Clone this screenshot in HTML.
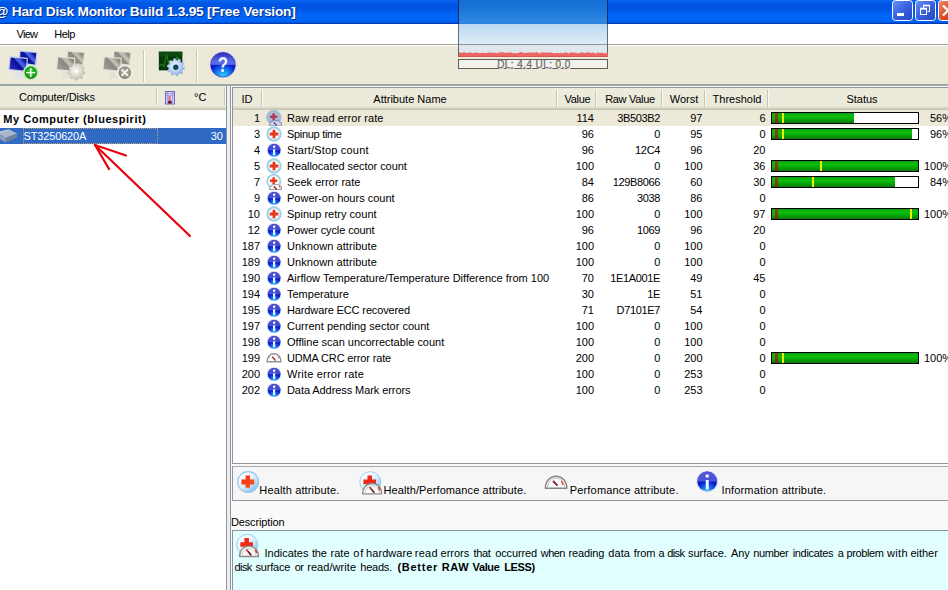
<!DOCTYPE html>
<html><head><meta charset="utf-8"><title>Hard Disk Monitor</title>
<style>
*{box-sizing:border-box;margin:0;padding:0}
html,body{width:948px;height:590px;overflow:hidden;background:#fafafa;font-family:"Liberation Sans",sans-serif;font-size:11px;color:#000}
.abs{position:absolute}
#title{left:0;top:0;width:948px;height:24px;background:linear-gradient(#0968f5 0,#0560ec 1.5px,#0055e2 3.5px,#0055e2 9px,#005cec 12px,#0066f8 15px,#0066f8 21px,#0058e0 22.5px,#0038b0 23.5px)}
#title .t{left:-5px;top:3.8px;color:#fff;font-weight:bold;font-size:13.7px;line-height:16px;letter-spacing:-0.2px;white-space:nowrap;text-shadow:1px 1px 0 #0a2a80}
#menu{left:0;top:24px;width:948px;height:20px;background:#fff}
#menu span{position:absolute;top:4px;font-size:11px}
#tb{left:0;top:44px;width:948px;height:42px;background:#ece9d8;border-top:1px solid #a5a295;box-shadow:inset 0 1px 0 #fff}
#tbline{left:0;top:84px;width:948px;height:2px;background:#9da7a6}
.sep{position:absolute;top:50px;width:1px;height:32px;background:#c9c6b6;border-right:1px solid #fff;box-sizing:content-box}
/* left */
#lhead{left:0;top:86px;width:226px;height:24px;background:linear-gradient(#ebeadb 0,#ebeadb 20px,#e4e1d1 21px,#d8d4c4 22px,#ccc8b8 23px,#c6c2b2 24px)}
#ltree{left:0;top:110px;width:226px;height:480px;background:#fff}
.hsep{position:absolute;top:2px;width:1px;height:17px;background:#c9c6b4;border-right:1px solid #faf9f2;box-sizing:content-box}
.hl{position:absolute;top:5px;white-space:nowrap}
#split{left:226px;top:86px;width:5px;height:504px;background:#eceff1;border-left:1px solid #8f959b;border-right:1px solid #8f959b}
/* right list */
#list{left:232px;top:87px;width:730px;height:377px;background:#fff;border:1px solid #8f959b}
#rhead{left:233px;top:88px;width:720px;height:22px;background:linear-gradient(#ebeadb 0,#ebeadb 18px,#e4e1d1 19px,#d8d4c4 20px,#ccc8b8 21px,#c6c2b2 22px)}
#rhead span{position:absolute;top:5px;white-space:nowrap;transform:translateX(-50%)}
.row{position:absolute;left:233px;width:715px;height:16px}
.row.sel{background:#ece9d8}
.c{position:absolute;top:1px;white-space:nowrap;line-height:14px}
.id{left:0;width:27px;text-align:right}
.ic{position:absolute;left:33px;top:0}
.nm{left:54px}
.v1,.v2,.v3,.v4{left:0;text-align:right}.v1{width:361px}.v2{width:427px;letter-spacing:-0.35px}.v3{width:469.5px}.v4{width:532.5px}
.bar{position:absolute;left:538px;top:2px;width:148px;height:12px;border:1px solid #000;background:#fff}
.bar i{position:absolute;top:0;height:10px}
.bar .g{left:0;background:linear-gradient(#0f9d0f 0,#0cc00c 30%,#0ab00a 55%,#067a06 100%)}
.bar .br{left:3px;width:3px;background:linear-gradient(#7a4a10,#8b3e0c 50%,#6a3008)}
.bar .ye{width:2px;background:#f0f000}
/* legend */
#legend{left:232px;top:466px;width:730px;height:35px;background:#f6f6f6;border:1px solid #8f959b;border-top-color:#a4aab0}
.lg{position:absolute;white-space:nowrap}
#desc{left:232px;top:530px;width:730px;height:70px;background:#e2ffff;border:1px solid #8a949e}
</style></head><body>
<svg width="0" height="0" style="position:absolute">
<defs>
<radialGradient id="gb" cx="50%" cy="45%" r="55%"><stop offset="0" stop-color="#fff"/><stop offset="0.65" stop-color="#f2f9fd"/><stop offset="1" stop-color="#c4e2f0"/></radialGradient>
<radialGradient id="gbs" cx="50%" cy="45%" r="55%"><stop offset="0" stop-color="#b8cce0"/><stop offset="1" stop-color="#9cb4d0"/></radialGradient>
<linearGradient id="gi" x1="0" y1="0" x2="0" y2="1"><stop offset="0" stop-color="#2a48d0"/><stop offset="0.45" stop-color="#0c28d0"/><stop offset="0.75" stop-color="#1448e0"/><stop offset="1" stop-color="#40a8f4"/></linearGradient>
<symbol id="ic-h" viewBox="0 0 16 16"><circle cx="8" cy="8" r="6.7" fill="url(#gb)" stroke="#a0d2e4" stroke-width="1.9"/><path d="M6.6 3.7h2.8v2.9h2.9v2.8h-2.9v2.9h-2.8v-2.9h-2.9v-2.8h2.9z" fill="#e8381c"/></symbol>
<symbol id="ic-i" viewBox="0 0 16 16"><circle cx="8.1" cy="8.2" r="7.1" fill="#c0ccf4" opacity="0.8"/><circle cx="8.1" cy="8.2" r="6.3" fill="url(#lgi2)"/><path d="M1.8 8.2a6.3 6.3 0 0 1 12.6 0z" fill="#5c62e2" opacity="0.7"/><circle cx="8.1" cy="4.7" r="1.25" fill="#f6f6ff"/><rect x="7.1" y="7.2" width="2" height="5.8" fill="#f4f8ff"/></symbol>
<symbol id="ic-hp" viewBox="0 0 16 16"><circle cx="7.8" cy="7.4" r="6.7" fill="url(#gb)" stroke="#a0d2e4" stroke-width="1.7"/><path d="M6.4 3.3h2.5v2.3h2.4v2.5h-2.4v2.3h-2.5v-2.3h-2.4v-2.5h2.4z" fill="#e8381c"/><path d="M3.6 15.6c0-3.4 2.6-5.4 6-5.4s6.2 2 6.2 5.4z" fill="#fcfcfc" stroke="#9a9a9e" stroke-width="1.1"/><path d="M10.6 15.2l-2.8-3" stroke="#902020" stroke-width="1.3"/><path d="M13.2 11.8l0.9 2" stroke="#e04040" stroke-width="1"/></symbol>
<symbol id="ic-hps" viewBox="0 0 16 16"><circle cx="7.8" cy="7.4" r="7.2" fill="url(#gbs)" stroke="#a4c0d6" stroke-width="1"/><path d="M6.4 3.3h2.5v2.3h2.4v2.5h-2.4v2.3h-2.5v-2.3h-2.4v-2.5h2.4z" fill="#b43c58"/><path d="M3.6 16c0-3.6 2.6-5.6 6-5.6s6.2 2 6.2 5.6z" fill="#d0d4ec" stroke="#8890b8" stroke-width="1.1"/><path d="M10.6 15.4l-2.8-3" stroke="#503080" stroke-width="1.3"/></symbol>
<symbol id="ic-p" viewBox="0 0 16 16"><path d="M1 11.8c0-4.8 3-8 7-8s7 3.2 7 8z" fill="#fcfcfc" stroke="#949494" stroke-width="1.4" stroke-linejoin="round"/><path d="M9.6 10.6l-3.4-3.8" stroke="#8a2424" stroke-width="1.3"/><path d="M12 6.6l0.9 1.8" stroke="#d05050" stroke-width="0.9"/><path d="M3.2 8.4l0.8-1.6" stroke="#b0b0b0" stroke-width="0.8"/></symbol>
</defs></svg>

<div id="title" class="abs"><span class="abs t" id="tt"><span id="tat">@</span> <span id="th">Hard Disk Monitor Build 1.3.95 [Free Version]</span></span></div>
<!--BTN--><svg class="abs" style="left:880px;top:0" width="68" height="24" viewBox="880 0 68 24">
<defs>
<linearGradient id="bb" x1="0" y1="0" x2="1" y2="1"><stop offset="0" stop-color="#6a92f6"/><stop offset="0.5" stop-color="#3a62e0"/><stop offset="1" stop-color="#2444c0"/></linearGradient>
<linearGradient id="br" x1="0" y1="0" x2="1" y2="1"><stop offset="0" stop-color="#f08868"/><stop offset="0.5" stop-color="#dc5030"/><stop offset="1" stop-color="#b83418"/></linearGradient>
</defs>
<rect x="892.5" y="0.5" width="20" height="20" rx="3" fill="url(#bb)" stroke="#fff" stroke-width="1"/>
<rect x="897" y="13" width="7" height="3" fill="#fff"/>
<rect x="915.5" y="0.5" width="20" height="20" rx="3" fill="url(#bb)" stroke="#fff" stroke-width="1"/>
<path d="M923.5 8V5.5h6v6h-2" fill="none" stroke="#fff" stroke-width="1"/><path d="M923 5.5h7" stroke="#fff" stroke-width="1.6"/>
<rect x="920.5" y="8.8" width="6" height="5.7" fill="none" stroke="#fff" stroke-width="1"/><path d="M920 8.6h7" stroke="#fff" stroke-width="1.8"/>
<rect x="938.5" y="0.5" width="20" height="20" rx="3" fill="url(#br)" stroke="#fff" stroke-width="1"/>
<path d="M943 5.5l10 10M953 5.5l-10 10" stroke="#fff" stroke-width="2.2"/>
</svg><!--/BTN-->
<div id="menu" class="abs"><span style="left:16.5px;letter-spacing:-0.7px">View</span><span style="left:54.3px;letter-spacing:-0.55px">Help</span></div>
<div id="tb" class="abs"></div>
<div id="tbline" class="abs"></div>
<svg class="abs" style="left:0;top:44px;filter:blur(0.45px)" width="260" height="42" viewBox="0 44 260 42">
<defs>
<linearGradient id="scrB" x1="0" y1="0.7" x2="1" y2="0"><stop offset="0" stop-color="#222cb8"/><stop offset="0.44" stop-color="#0c0c94"/><stop offset="0.54" stop-color="#4a68e8"/><stop offset="0.66" stop-color="#3c54dc"/><stop offset="0.78" stop-color="#1418a4"/><stop offset="1" stop-color="#0e1090"/></linearGradient>
<linearGradient id="scrG" x1="0" y1="0.7" x2="1" y2="0"><stop offset="0" stop-color="#96948c"/><stop offset="0.44" stop-color="#807e76"/><stop offset="0.54" stop-color="#c0beb2"/><stop offset="0.66" stop-color="#b4b2a6"/><stop offset="0.78" stop-color="#86847a"/><stop offset="1" stop-color="#7e7c74"/></linearGradient>
<radialGradient id="grn" cx="50%" cy="45%" r="55%"><stop offset="0" stop-color="#58d458"/><stop offset="0.65" stop-color="#22a822"/><stop offset="1" stop-color="#0c780c"/></radialGradient>
<radialGradient id="gry" cx="50%" cy="45%" r="55%"><stop offset="0" stop-color="#b2b0a6"/><stop offset="0.65" stop-color="#9a988e"/><stop offset="1" stop-color="#807e74"/></radialGradient>
<linearGradient id="orbT" x1="0" y1="0" x2="0" y2="1"><stop offset="0" stop-color="#2830b8"/><stop offset="0.35" stop-color="#5a68e4"/><stop offset="1" stop-color="#6476e8"/></linearGradient>
<radialGradient id="orbB" cx="50%" cy="100%" r="80%"><stop offset="0" stop-color="#38d8ff"/><stop offset="0.35" stop-color="#1888f0"/><stop offset="0.7" stop-color="#0a20d0"/><stop offset="1" stop-color="#0610a0"/></radialGradient>
<radialGradient id="gearB" cx="45%" cy="40%" r="60%"><stop offset="0" stop-color="#eef5ff"/><stop offset="0.6" stop-color="#b4d0f4"/><stop offset="1" stop-color="#7ca4e0"/></radialGradient>
<radialGradient id="gearG" cx="45%" cy="40%" r="60%"><stop offset="0" stop-color="#f4f3ec"/><stop offset="0.6" stop-color="#dcdad0"/><stop offset="1" stop-color="#c4c2b6"/></radialGradient>
<clipPath id="orbTop"><rect x="205" y="50" width="36" height="14.6"/></clipPath>
<clipPath id="orbBot"><rect x="205" y="64.6" width="36" height="16"/></clipPath>
</defs>
<g transform="translate(0 0)" opacity="1">
 <path d="M19.3 50.5L37.5 52.0L36.2 65.8L18.6 63.8z" fill="#c4cdf0"/>
 <path d="M20.5 51.8L36.3 53.1L35 64.4L19.8 62.6z" fill="url(#scrB)"/>
 <path d="M28 66L32 66.4L32.3 69.5L35 71L27 70.5z" fill="#dfe3ee"/>
 <path d="M9.6 56.2L27.8 57.8L27.0 72.2L8.2 70.0z" fill="#c4cdf0"/>
 <path d="M10.8 57.6L26.6 58.9L25.9 70.8L9.5 68.9z" fill="url(#scrB)"/>
 <path d="M15.5 71.6L20.8 72L21.2 76.3L24.5 78.2L12 78L15.2 76z" fill="#dfe3ee"/>
</g><circle cx="30.8" cy="72.6" r="7.9" fill="#cdebc8" opacity="0.95"/><circle cx="30.8" cy="72.6" r="6.3" fill="url(#grn)"/><path d="M30.8 68v9.2M26.2 72.6h9.2" stroke="#f0fff0" stroke-width="1.4"/><g transform="translate(47.6 0)" opacity="0.9">
 <path d="M19.3 50.5L37.5 52.0L36.2 65.8L18.6 63.8z" fill="#e2e0d6"/>
 <path d="M20.5 51.8L36.3 53.1L35 64.4L19.8 62.6z" fill="url(#scrG)"/>
 <path d="M28 66L32 66.4L32.3 69.5L35 71L27 70.5z" fill="#e4e2d8"/>
 <path d="M9.6 56.2L27.8 57.8L27.0 72.2L8.2 70.0z" fill="#e2e0d6"/>
 <path d="M10.8 57.6L26.6 58.9L25.9 70.8L9.5 68.9z" fill="url(#scrG)"/>
 <path d="M15.5 71.6L20.8 72L21.2 76.3L24.5 78.2L12 78L15.2 76z" fill="#e4e2d8"/>
</g><polygon points="84.97,72.35 84.71,73.83 82.56,74.47 81.97,75.50 82.48,77.68 81.33,78.64 79.27,77.76 78.16,78.17 77.15,80.17 75.65,80.17 74.64,78.17 73.53,77.76 71.47,78.64 70.32,77.68 70.83,75.50 70.24,74.47 68.09,73.83 67.83,72.35 69.63,71.01 69.83,69.84 68.61,67.97 69.36,66.67 71.59,66.79 72.50,66.03 72.77,63.81 74.17,63.29 75.81,64.83 76.99,64.83 78.63,63.29 80.03,63.81 80.30,66.03 81.21,66.79 83.44,66.67 84.19,67.97 82.97,69.84 83.17,71.01" fill="url(#gearG)" stroke="#b4b2a6" stroke-width="0.6" stroke-linejoin="round"/><circle cx="76.4" cy="71.6" r="1.8" fill="#fff"/><g transform="translate(94 0)" opacity="0.9">
 <path d="M19.3 50.5L37.5 52.0L36.2 65.8L18.6 63.8z" fill="#e2e0d6"/>
 <path d="M20.5 51.8L36.3 53.1L35 64.4L19.8 62.6z" fill="url(#scrG)"/>
 <path d="M28 66L32 66.4L32.3 69.5L35 71L27 70.5z" fill="#e4e2d8"/>
 <path d="M9.6 56.2L27.8 57.8L27.0 72.2L8.2 70.0z" fill="#e2e0d6"/>
 <path d="M10.8 57.6L26.6 58.9L25.9 70.8L9.5 68.9z" fill="url(#scrG)"/>
 <path d="M15.5 71.6L20.8 72L21.2 76.3L24.5 78.2L12 78L15.2 76z" fill="#e4e2d8"/>
</g><circle cx="124.8" cy="72.6" r="7.9" fill="#f0efe6"/><circle cx="124.8" cy="72.6" r="6.3" fill="url(#gry)"/><path d="M121.6 69.4l6.4 6.4M128 69.4l-6.4 6.4" stroke="#f8f7f0" stroke-width="1.8"/><rect x="156.6" y="49.8" width="27.6" height="22.2" rx="1" fill="#f0f0e8" stroke="#d8d8cc" stroke-width="0.5"/><rect x="158.8" y="51.6" width="23.6" height="18.8" fill="#063606"/><path d="M159 66l3-2 2 3 2.5-13 2.5 11 2-4 3 2 3-6 3 3" fill="none" stroke="#1f7a1f" stroke-width="1.2"/><rect x="158.8" y="51.6" width="23.6" height="5" fill="#1a5a1a" opacity="0.5"/><polygon points="184.57,67.89 184.36,69.25 182.27,69.88 181.77,70.86 182.49,72.92 181.52,73.89 179.46,73.17 178.48,73.67 177.85,75.76 176.49,75.97 175.25,74.18 174.17,74.01 172.43,75.33 171.20,74.70 171.25,72.52 170.48,71.75 168.30,71.80 167.67,70.57 168.99,68.83 168.82,67.75 167.03,66.51 167.24,65.15 169.33,64.52 169.83,63.54 169.11,61.48 170.08,60.51 172.14,61.23 173.12,60.73 173.75,58.64 175.11,58.43 176.35,60.22 177.43,60.39 179.17,59.07 180.40,59.70 180.35,61.88 181.12,62.65 183.30,62.60 183.93,63.83 182.61,65.57 182.78,66.65" fill="url(#gearB)" stroke="#9cbce8" stroke-width="0.6" stroke-linejoin="round"/><circle cx="175.8" cy="67.2" r="2.7" fill="#0a4a58"/><circle cx="223" cy="64.7" r="13.5" fill="#d4ccf4" opacity="0.95"/><circle cx="223" cy="64.7" r="12.3" fill="url(#orbT)" clip-path="url(#orbTop)"/><circle cx="223" cy="64.7" r="12.3" fill="url(#orbB)" clip-path="url(#orbBot)"/><circle cx="223" cy="64.7" r="12.3" fill="none" stroke="#1a1c9c" stroke-width="0.8" opacity="0.7"/><text transform="translate(223 72.2) scale(0.8 1)" x="0" y="0" text-anchor="middle" font-family="Liberation Sans" font-weight="bold" font-size="21.5" fill="#f0f2ff">?</text></svg>
<div class="sep" style="left:143px"></div><div class="sep" style="left:196px"></div>

<!--OV--><div class="abs" id="ov" style="left:458px;top:0;width:150px;height:57px;border-bottom:1px solid #b84c4c;background:linear-gradient(#146ed4 0,#1a74d8 8px,#2680de 16px,#308ae4 23px,#2a7ad4 23.9px,#bad8f2 24px,#cde2f5 34px,#ddecf7 43.9px,#8c979e 44px,#8c979e 45px,#dfe8ec 45.1px,#dde6e8 57px)"><i class="abs" style="left:0;top:0;width:1px;height:24px;background:#0c2c6c"></i><i class="abs" style="right:0;top:0;width:1px;height:24px;background:#0c2c6c"></i><i class="abs" style="left:0;top:24px;width:1px;height:32px;background:#5e6a74"></i><i class="abs" style="right:0;top:24px;width:1px;height:32px;background:#5e6a74"></i></div>
<svg class="abs" style="left:0;top:0" width="948" height="60"><path d="M459 56.5L459.0 52.62L460.0 52.29L462.0 52.96L463.5 52.25L464.5 52.51L465.5 52.47L467.0 53.02L468.0 52.95L469.5 52.26L471.5 52.74L473.5 52.93L474.5 52.96L476.5 52.33L477.5 53.00L480.0 53.21L482.5 52.67L484.0 53.11L486.0 52.88L488.5 52.57L489.5 52.87L491.5 52.40L492.5 52.65L494.5 52.64L497.0 52.95L498.0 53.43L499.0 52.28L501.5 52.57L503.5 52.23L505.0 52.99L506.5 52.40L508.0 52.72L510.5 52.30L512.5 53.35L514.5 53.12L517.0 53.45L518.5 52.40L519.5 52.83L521.5 51.77L523.5 52.99L525.0 53.10L526.0 52.79L528.5 52.72L531.0 52.22L532.0 53.48L533.0 51.84L534.0 52.94L536.0 52.20L537.5 52.20L539.5 53.44L542.0 52.36L544.5 52.82L546.0 52.33L548.0 52.82L549.0 52.47L551.0 52.39L552.0 53.19L553.0 53.11L555.0 53.38L556.5 52.89L558.5 53.03L560.0 53.25L561.5 52.46L562.5 53.49L565.0 52.54L567.0 52.78L569.0 53.44L570.5 52.33L572.5 52.47L573.5 52.82L574.5 52.49L577.0 53.22L579.5 53.36L581.5 52.31L584.0 52.80L585.0 53.14L586.5 52.24L589.0 52.45L591.5 53.05L593.0 52.23L594.0 52.88L596.5 53.48L598.0 52.24L599.5 53.19L602.0 52.48L604.0 53.37L606.5 53.28L608 52.6L608 56.5z" fill="#ee6462"/></svg>
<div class="abs" style="left:458px;top:59px;width:150px;height:10px;border:1px solid #5e5e56;background:#f3f2ea"></div>
<span class="abs" id="dl" style="left:459px;top:58.7px;width:150px;text-align:center;font-size:10px;line-height:12px;color:#747470;-webkit-text-stroke:0.35px #747470;text-shadow:1px 1px 0 #fff;white-space:nowrap;letter-spacing:0.42px">DL: 4.4 UL: 0.0</span>
<!--/OV-->
<div id="lhead" class="abs"><span class="hl" style="left:19px;letter-spacing:-0.18px">Computer/Disks</span><i class="hsep" style="left:156px"></i><!--TH--><svg class="abs" style="left:163px;top:3px;filter:blur(0.3px)" width="14" height="17" viewBox="163 89 14 17"><rect x="165.5" y="91.5" width="9" height="12.5" fill="#d4ccfa" stroke="#6c6cb4" stroke-width="1"/><path d="M167.5 92v11M172.5 92v11" stroke="#a8a0ec" stroke-width="1"/><path d="M166 93.5h8M166 95.5h8" stroke="#8888d0" stroke-width="0.7" opacity="0.7"/><rect x="168.4" y="95.8" width="2.3" height="6" fill="#e07488"/><ellipse cx="169.9" cy="102.2" rx="1.9" ry="1.6" fill="#701030"/></svg><!--/TH--><span class="hl" style="left:194px">°C</span><i class="hsep" style="left:224px"></i></div>
<div id="ltree" class="abs">
 <span class="abs" style="left:3.3px;top:3px;font-weight:bold;white-space:nowrap;letter-spacing:0.54px">My Computer (bluespirit)</span>
 <div class="abs" style="left:0;top:18px;width:226px;height:16px;background:#316ac5;color:#fff"><svg class="abs" style="left:0;top:0" width="20" height="16" viewBox="0 128 20 16"><path d="M-4 132.2L8.6 129.2L17.2 133.4L5.8 138z" fill="#a9b7cf"/><path d="M-4 132.2L5.8 138L5.8 142.8L-4 137z" fill="#8e9dbb"/><path d="M5.8 138L17.2 133.4L17.2 137.6L5.8 142.8z" fill="#71809f"/><path d="M-2 133L7 130.4" stroke="#c4cfe2" stroke-width="0.8"/></svg><i class="abs" style="left:23px;top:0;width:135px;height:16px;border:1px dotted rgba(214,170,100,.85)"></i><span class="abs" style="left:23.5px;top:2px;letter-spacing:-0.15px">ST3250620A</span><span class="abs" style="right:3px;top:2px">30</span></div>
</div>
<div id="split" class="abs"></div>

<div id="list" class="abs"></div>
<div id="rhead" class="abs">
<span style="left:14px">ID</span><i class="hsep" style="left:28px"></i>
<span style="left:177px">Attribute Name</span><i class="hsep" style="left:323px"></i>
<span style="left:344.5px;letter-spacing:-0.3px">Value</span><i class="hsep" style="left:362px"></i>
<span style="left:397px;letter-spacing:-0.3px">Raw Value</span><i class="hsep" style="left:428px"></i>
<span style="left:451px">Worst</span><i class="hsep" style="left:471px"></i>
<span style="left:504px">Threshold</span><i class="hsep" style="left:534px"></i>
<span style="left:629px">Status</span>
</div>
<div class="row sel" style="top:110px"><span class="c id">1</span><svg class="ic" width="16" height="16" viewBox="0 0 16 16"><use href="#ic-hps"/></svg><span class="c nm" style="letter-spacing:0.061px">Raw read error rate</span><span class="c v1">114</span><span class="c v2">3B503B2</span><span class="c v3">97</span><span class="c v4">6</span><span class="bar"><i class="g" style="width:82px"></i><i class="br"></i><i class="ye" style="left:10px"></i></span><span class="c pc" style="left:697px">56%</span></div>
<div class="row" style="top:126px"><span class="c id">3</span><svg class="ic" width="16" height="16" viewBox="0 0 16 16"><use href="#ic-h"/></svg><span class="c nm" style="letter-spacing:-0.310px">Spinup time</span><span class="c v1">96</span><span class="c v2">0</span><span class="c v3">95</span><span class="c v4">0</span><span class="bar"><i class="g" style="width:140px"></i><i class="br"></i><i class="ye" style="left:10px"></i></span><span class="c pc" style="left:697px">96%</span></div>
<div class="row" style="top:142px"><span class="c id">4</span><svg class="ic" width="16" height="16" viewBox="0 0 16 16"><use href="#ic-i"/></svg><span class="c nm" style="letter-spacing:0.173px">Start/Stop count</span><span class="c v1">96</span><span class="c v2">12C4</span><span class="c v3">96</span><span class="c v4">20</span></div>
<div class="row" style="top:158px"><span class="c id">5</span><svg class="ic" width="16" height="16" viewBox="0 0 16 16"><use href="#ic-h"/></svg><span class="c nm" style="letter-spacing:-0.052px">Reallocated sector count</span><span class="c v1">100</span><span class="c v2">0</span><span class="c v3">100</span><span class="c v4">36</span><span class="bar"><i class="g" style="width:146px"></i><i class="br"></i><i class="ye" style="left:48px"></i></span><span class="c pc" style="left:691px">100%</span></div>
<div class="row" style="top:174px"><span class="c id">7</span><svg class="ic" width="16" height="16" viewBox="0 0 16 16"><use href="#ic-hp"/></svg><span class="c nm">Seek error rate</span><span class="c v1">84</span><span class="c v2">129B8066</span><span class="c v3">60</span><span class="c v4">30</span><span class="bar"><i class="g" style="width:123px"></i><i class="br"></i><i class="ye" style="left:40px"></i></span><span class="c pc" style="left:697px">84%</span></div>
<div class="row" style="top:190px"><span class="c id">9</span><svg class="ic" width="16" height="16" viewBox="0 0 16 16"><use href="#ic-i"/></svg><span class="c nm">Power-on hours count</span><span class="c v1">86</span><span class="c v2">3038</span><span class="c v3">86</span><span class="c v4">0</span></div>
<div class="row" style="top:206px"><span class="c id">10</span><svg class="ic" width="16" height="16" viewBox="0 0 16 16"><use href="#ic-h"/></svg><span class="c nm" style="letter-spacing:0.018px">Spinup retry count</span><span class="c v1">100</span><span class="c v2">0</span><span class="c v3">100</span><span class="c v4">97</span><span class="bar"><i class="g" style="width:146px"></i><i class="br"></i><i class="ye" style="left:138px"></i></span><span class="c pc" style="left:691px">100%</span></div>
<div class="row" style="top:222px"><span class="c id">12</span><svg class="ic" width="16" height="16" viewBox="0 0 16 16"><use href="#ic-i"/></svg><span class="c nm" style="letter-spacing:-0.100px">Power cycle count</span><span class="c v1">96</span><span class="c v2">1069</span><span class="c v3">96</span><span class="c v4">20</span></div>
<div class="row" style="top:238px"><span class="c id">187</span><svg class="ic" width="16" height="16" viewBox="0 0 16 16"><use href="#ic-i"/></svg><span class="c nm" style="letter-spacing:0.069px">Unknown attribute</span><span class="c v1">100</span><span class="c v2">0</span><span class="c v3">100</span><span class="c v4">0</span></div>
<div class="row" style="top:254px"><span class="c id">189</span><svg class="ic" width="16" height="16" viewBox="0 0 16 16"><use href="#ic-i"/></svg><span class="c nm" style="letter-spacing:0.069px">Unknown attribute</span><span class="c v1">100</span><span class="c v2">0</span><span class="c v3">100</span><span class="c v4">0</span></div>
<div class="row" style="top:270px"><span class="c id">190</span><svg class="ic" width="16" height="16" viewBox="0 0 16 16"><use href="#ic-i"/></svg><span class="c nm" style="letter-spacing:0.006px">Airflow Temperature/Temperature Difference from 100</span><span class="c v1">70</span><span class="c v2">1E1A001E</span><span class="c v3">49</span><span class="c v4">45</span></div>
<div class="row" style="top:286px"><span class="c id">194</span><svg class="ic" width="16" height="16" viewBox="0 0 16 16"><use href="#ic-i"/></svg><span class="c nm">Temperature</span><span class="c v1">30</span><span class="c v2">1E</span><span class="c v3">51</span><span class="c v4">0</span></div>
<div class="row" style="top:302px"><span class="c id">195</span><svg class="ic" width="16" height="16" viewBox="0 0 16 16"><use href="#ic-i"/></svg><span class="c nm" style="letter-spacing:-0.129px">Hardware ECC recovered</span><span class="c v1">71</span><span class="c v2">D7101E7</span><span class="c v3">54</span><span class="c v4">0</span></div>
<div class="row" style="top:318px"><span class="c id">197</span><svg class="ic" width="16" height="16" viewBox="0 0 16 16"><use href="#ic-i"/></svg><span class="c nm" style="letter-spacing:0.019px">Current pending sector count</span><span class="c v1">100</span><span class="c v2">0</span><span class="c v3">100</span><span class="c v4">0</span></div>
<div class="row" style="top:334px"><span class="c id">198</span><svg class="ic" width="16" height="16" viewBox="0 0 16 16"><use href="#ic-i"/></svg><span class="c nm" style="letter-spacing:-0.010px">Offline scan uncorrectable count</span><span class="c v1">100</span><span class="c v2">0</span><span class="c v3">100</span><span class="c v4">0</span></div>
<div class="row" style="top:350px"><span class="c id">199</span><svg class="ic" width="16" height="16" viewBox="0 0 16 16"><use href="#ic-p"/></svg><span class="c nm" style="letter-spacing:-0.156px">UDMA CRC error rate</span><span class="c v1">200</span><span class="c v2">0</span><span class="c v3">200</span><span class="c v4">0</span><span class="bar"><i class="g" style="width:146px"></i><i class="br"></i><i class="ye" style="left:10px"></i></span><span class="c pc" style="left:691px">100%</span></div>
<div class="row" style="top:366px"><span class="c id">200</span><svg class="ic" width="16" height="16" viewBox="0 0 16 16"><use href="#ic-i"/></svg><span class="c nm" style="letter-spacing:0.207px">Write error rate</span><span class="c v1">100</span><span class="c v2">0</span><span class="c v3">253</span><span class="c v4">0</span></div>
<div class="row" style="top:382px"><span class="c id">202</span><svg class="ic" width="16" height="16" viewBox="0 0 16 16"><use href="#ic-i"/></svg><span class="c nm" style="letter-spacing:-0.078px">Data Address Mark errors</span><span class="c v1">100</span><span class="c v2">0</span><span class="c v3">253</span><span class="c v4">0</span></div>

<div id="legend" class="abs"></div>
<!--LG--><svg class="abs" style="left:232px;top:466px" width="600" height="36" viewBox="232 466 600 36">
<defs>
<linearGradient id="lgb" x1="0.15" y1="0.1" x2="0.85" y2="0.95"><stop offset="0" stop-color="#ffffff"/><stop offset="0.4" stop-color="#e8f3fc"/><stop offset="0.72" stop-color="#b4daf6"/><stop offset="1" stop-color="#74b8ee"/></linearGradient>
<linearGradient id="lgr" x1="0" y1="0" x2="1" y2="1"><stop offset="0" stop-color="#f02a10"/><stop offset="1" stop-color="#ff5a20"/></linearGradient>
<radialGradient id="lgi2" cx="50%" cy="100%" r="75%"><stop offset="0" stop-color="#40d0ff"/><stop offset="0.3" stop-color="#1878f0"/><stop offset="0.7" stop-color="#0a1cc8"/><stop offset="1" stop-color="#1418a8"/></radialGradient><linearGradient id="lgi" x1="0" y1="0" x2="0" y2="1"><stop offset="0" stop-color="#3050d4"/><stop offset="0.4" stop-color="#0c24cc"/><stop offset="0.7" stop-color="#1040e0"/><stop offset="1" stop-color="#48b4f8"/></linearGradient>
</defs>
<circle cx="248.1" cy="482" r="10.4" fill="url(#lgb)" stroke="#94c4ec" stroke-width="1.1"/>
<path d="M245.6 475.5h4.4v4.1h4.2v4.8h-4.2v3.4h-4.4v-3.4h-4.1v-4.8h4.1z" fill="url(#lgr)"/>
<g id="hpbig"><circle cx="370.3" cy="482.2" r="10.5" fill="url(#lgb)" stroke="#98ccf0" stroke-width="1"/>
<path d="M367.5 475.5h4.5v4.1h4v4.6h-4v3.4h-4.5v-3.4h-4.1v-4.6h4.1z" fill="#f02818"/>
<path d="M362.6 493.9c0-6.4 4.2-10.4 9.5-10.4s9.5 4 9.5 10.4z" fill="#fbfbfb" stroke="#8a8a8a" stroke-width="1.3" stroke-linejoin="round"/>
<path d="M365 493.9c0-4.8 3-8 7.1-8s7.1 3.2 7.1 8" fill="none" stroke="#c0c0c0" stroke-width="0.9"/>
<path d="M374.4 492.8l-4.8-5.6" stroke="#6a2020" stroke-width="1.7"/><path d="M378.4 486.8l1.4 3.6" stroke="#e83030" stroke-width="1.3"/><path d="M369.4 487.2l1.6 2.4" stroke="#e05050" stroke-width="1"/>
</g>
<path d="M545.4 488.2c0-7.2 4.8-12 10.7-12s10.7 4.8 10.7 12z" fill="#fbfbfb" stroke="#868686" stroke-width="1.5" stroke-linejoin="round"/>
<path d="M547.6 487.6c0-5.6 3.8-9.4 8.5-9.4s8.5 3.8 8.5 9.4" fill="none" stroke="#b4b4b4" stroke-width="0.9"/>
<path d="M557.6 485.6l-4.6-4.6" stroke="#7a2030" stroke-width="1.8"/><path d="M561.4 481l1.8 4" stroke="#e05030" stroke-width="1.4"/>
<circle cx="707.2" cy="481.5" r="10.7" fill="#c8d0f6" opacity="0.9"/>
<circle cx="707.2" cy="481.4" r="9.8" fill="url(#lgi2)"/>
<path d="M697.4 481.4a9.8 9.8 0 0 1 19.6 0z" fill="#6468e4" opacity="0.75"/>
<circle cx="707.2" cy="476" r="1.8" fill="#f4f4ff"/>
<rect x="705.8" y="480" width="2.9" height="9.4" fill="#f4f8ff"/>
</svg><!--/LG-->
<span class="lg" style="left:259.3px;top:484px;letter-spacing:0.14px">Health attribute.</span>
<span class="lg" style="left:383.5px;top:484px;letter-spacing:0.10px">Health/Perfomance attribute.</span>
<span class="lg" style="left:569.7px;top:484px;letter-spacing:0.18px">Perfomance attribute.</span>
<span class="lg" style="left:721.4px;top:484px;letter-spacing:0.18px">Information attribute.</span>
<span class="lg" style="left:231px;top:516px;letter-spacing:-0.15px">Description</span>
<div id="desc" class="abs"></div>
<svg class="abs" style="left:232px;top:530px" width="40" height="34" viewBox="232 530 40 34"><use href="#hpbig" transform="translate(-123.1 62.6)"/></svg>
<span class="lg" style="left:264.6px;top:547px;letter-spacing:-0.03px">Indicates</span>
<span class="lg" style="left:312.0px;top:547px;letter-spacing:-0.20px">the</span>
<span class="lg" style="left:330.4px;top:547px;letter-spacing:0.08px">rate</span>
<span class="lg" style="left:353.2px;top:547px;letter-spacing:0.90px">of</span>
<span class="lg" style="left:366.0px;top:547px;letter-spacing:0.08px">hardware</span>
<span class="lg" style="left:414.7px;top:547px;letter-spacing:0.29px">read</span>
<span class="lg" style="left:440.6px;top:547px;letter-spacing:-0.01px">errors</span>
<span class="lg" style="left:473.5px;top:547px;letter-spacing:-0.35px">that</span>
<span class="lg" style="left:495.2px;top:547px;letter-spacing:-0.13px">occurred</span>
<span class="lg" style="left:540.8px;top:547px;letter-spacing:-0.60px">when</span>
<span class="lg" style="left:568.6px;top:547px;letter-spacing:-0.15px">reading</span>
<span class="lg" style="left:608.3px;top:547px;letter-spacing:0.09px">data</span>
<span class="lg" style="left:633.7px;top:547px;letter-spacing:-0.10px">from</span>
<span class="lg" style="left:658.4px;top:547px">a</span>
<span class="lg" style="left:667.2px;top:547px;letter-spacing:-0.60px">disk</span>
<span class="lg" style="left:688.1px;top:547px;letter-spacing:-0.05px">surface.</span>
<span class="lg" style="left:731.1px;top:547px;letter-spacing:-0.18px">Any</span>
<span class="lg" style="left:753.3px;top:547px;letter-spacing:-0.38px">number</span>
<span class="lg" style="left:792.7px;top:547px;letter-spacing:-0.33px">indicates</span>
<span class="lg" style="left:837.7px;top:547px">a</span>
<span class="lg" style="left:846.6px;top:547px;letter-spacing:-0.39px">problem</span>
<span class="lg" style="left:886.9px;top:547px;letter-spacing:0.35px">with</span>
<span class="lg" style="left:910.5px;top:547px;letter-spacing:-0.03px">either</span>
<span class="lg" style="left:234.6px;top:561px;letter-spacing:-0.60px">disk</span>
<span class="lg" style="left:255.5px;top:561px;letter-spacing:-0.20px">surface</span>
<span class="lg" style="left:294.7px;top:561px;letter-spacing:-0.60px">or</span>
<span class="lg" style="left:307.2px;top:561px;letter-spacing:0.06px">read/write</span>
<span class="lg" style="left:360.3px;top:561px;letter-spacing:-0.25px">heads.</span>
<b class="lg" style="left:397.4px;top:561px;letter-spacing:0.74px">(Better</b>
<b class="lg" style="left:441.7px;top:561px;letter-spacing:0.61px">RAW</b>
<b class="lg" style="left:472.6px;top:561px;letter-spacing:-0.39px">Value</b>
<b class="lg" style="left:504.2px;top:561px;letter-spacing:-0.38px">LESS)</b>


<svg class="abs" style="left:0;top:0" width="948" height="590"><g stroke="#e8000c" stroke-width="2.2" fill="none" stroke-linecap="round"><path d="M190 236L143 191L95 145"/><path d="M95 145L126 155.5"/><path d="M95 145L109 169"/></g></svg>
</body></html>
